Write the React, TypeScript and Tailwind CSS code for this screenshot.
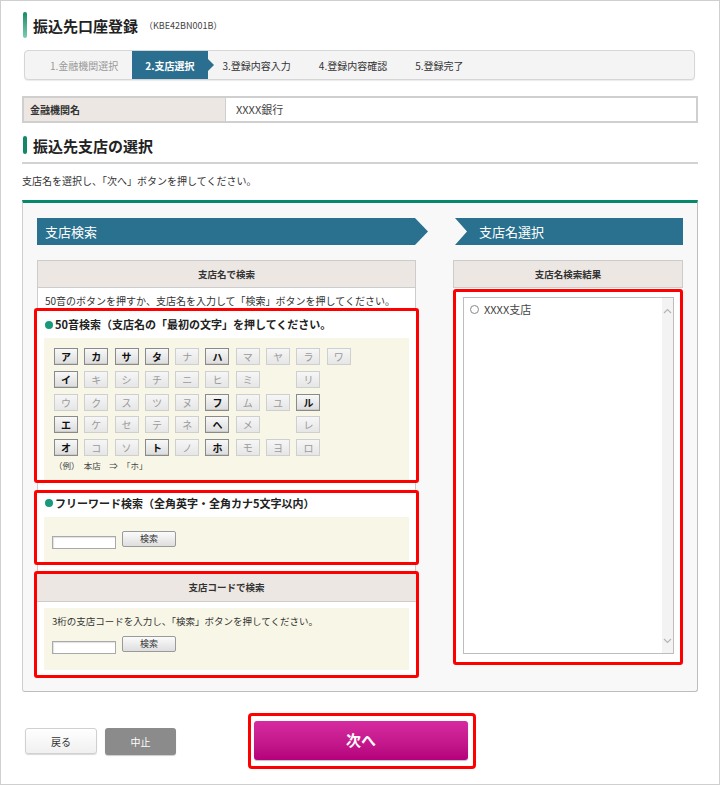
import React from "react";

const rows: string[][] = [
  ["ア", "カ", "サ", "タ", "ナ", "ハ", "マ", "ヤ", "ラ", "ワ"],
  ["イ", "キ", "シ", "チ", "ニ", "ヒ", "ミ", "", "リ", ""],
  ["ウ", "ク", "ス", "ツ", "ヌ", "フ", "ム", "ユ", "ル", ""],
  ["エ", "ケ", "セ", "テ", "ネ", "ヘ", "メ", "", "レ", ""],
  ["オ", "コ", "ソ", "ト", "ノ", "ホ", "モ", "ヨ", "ロ", ""],
];
const activeKana = "アカサタハイフルエヘオトホ";

function KanaButton({ k }: { k: string }) {
  if (!k) return <div className="w-[24px] h-[17px]" />;
  const on = activeKana.includes(k);
  return (
    <div
      className={
        on
          ? "w-[24px] h-[17px] flex items-center justify-center text-[10px] font-bold text-[#111] border border-[#8a8a8a] bg-linear-to-b from-[#f8f8f8] to-[#dcdcdc] shadow-[inset_0_-1px_0_rgba(0,0,0,0.08)]"
          : "w-[24px] h-[17px] flex items-center justify-center text-[10px] text-[#9a9a9a] border border-[#cfcfcf] bg-linear-to-b from-[#f6f6f6] to-[#e6e6e6]"
      }
    >
      {k}
    </div>
  );
}

function SearchRow() {
  return (
    <div className="flex items-start">
      <div className="mt-[5px] w-[64px] h-[13px] bg-white border border-[#a9a9a9] shadow-[inset_1px_1px_1px_rgba(0,0,0,0.12)]" />
      <div className="ml-[6px] w-[54px] h-[16px] flex items-center justify-center text-[9px] text-[#333] border border-[#9a9a9a] rounded-[2px] bg-linear-to-b from-[#fbfbfb] to-[#dedede]">
        検索
      </div>
    </div>
  );
}

export default function App() {
  return (
    <div className="w-[720px] h-[785px] bg-white border border-[#cfcfcf] px-[21px] pt-[11px] text-[#333] [font-family:'Noto_Sans_CJK_JP','Noto_Sans',sans-serif]">
      {/* Title */}
      <div className="flex items-center h-[26px]">
        <div className="ml-[1px] w-[4px] h-[26px] rounded-[2px] bg-linear-to-b from-[#0a8a68] to-[#7ccdb2]" />
        <div className="ml-[6px] text-[15px] font-bold text-[#222] leading-none">振込先口座登録</div>
        <div className="ml-[6px] text-[9px] text-[#444] leading-none">（KBE42BN001B）</div>
      </div>

      {/* Stepper */}
      <div className="mt-[12px] ml-[2px] w-[671px] h-[30px] flex items-center border border-[#d6d6d6] rounded-[4px] bg-[#f4f4f4] shadow-[0_1px_1px_rgba(0,0,0,0.08)] text-[10px]">
        <div className="pl-[25px] text-[#999]">1.金融機関選択</div>
        <div className="ml-[14px] relative h-full flex items-center bg-[#2a6f8f] px-[13px] text-white font-bold">
          2.支店選択
          <div className="absolute right-[-6px] top-[8px] w-0 h-0 border-y-[6px] border-y-transparent border-l-[6px] border-l-[#2a6f8f]" />
        </div>
        <div className="ml-[15px] text-[#333]">3.登録内容入力</div>
        <div className="ml-[28px] text-[#333]">4.登録内容確認</div>
        <div className="ml-[28px] text-[#333]">5.登録完了</div>
      </div>

      {/* Info table */}
      <div className="mt-[16px] h-[27px] flex border-2 border-[#cfcfcf]">
        <div className="w-[202px] bg-[#ece7e2] border-r border-[#cfcfcf] flex items-center pl-[6px] text-[10px] font-bold text-[#333]">
          金融機関名
        </div>
        <div className="flex-1 flex items-center pl-[10px] text-[11px] text-[#444]">XXXX銀行</div>
      </div>

      {/* Section heading */}
      <div className="mt-[13px] flex items-center h-[18px]">
        <div className="ml-[1px] w-[4px] h-[18px] rounded-[2px] bg-[#138866]" />
        <div className="ml-[6px] text-[15px] font-bold text-[#222] leading-none">振込先支店の選択</div>
      </div>
      <div className="mt-[8px] h-[2px] bg-[#d2d2d2]" />
      <div className="mt-[11px] text-[10px] leading-[12px] text-[#333]">支店名を選択し、「次へ」ボタンを押してください。</div>

      {/* Main panel */}
      <div className="mt-[13px] h-[492px] bg-[#f8f8f8] border border-[#cfcfcf] border-t-[3px] border-t-[#04896b] border-r-[#bdbdbd] border-b-[#bdbdbd] rounded-b-[3px] pl-[14px] pt-[15px] flex">
        {/* Left column */}
        <div className="w-[391px]">
          <div className="h-[27px] bg-[#2a7190] [clip-path:polygon(0_0,calc(100%-13px)_0,100%_50%,calc(100%-13px)_100%,0_100%)] flex items-center pl-[8px] text-[13px] text-white">
            支店検索
          </div>
          <div className="mt-[15px] w-[379px] bg-white border border-[#cccccc]">
            <div className="h-[27px] bg-[#ece7e2] border-b border-[#cccccc] flex items-center justify-center text-[9.5px] font-bold text-[#333]">
              支店名で検索
            </div>
            <div className="h-[20px] pl-[7px] pt-[6px] text-[10px] leading-[13px] text-[#333] whitespace-nowrap">
              50音のボタンを押すか、支店名を入力して「検索」ボタンを押してください。
            </div>

            {/* 50音検索 */}
            <div className="-mx-[4px] border-[3px] border-[#ff0000] rounded-[3px] bg-white relative">
              <div className="h-[27px] flex items-center pl-[8px] text-[11px] font-bold text-[#222]">
                <span className="w-[8px] h-[8px] rounded-full bg-[#17997a] mr-[2px]" />
                50音検索（支店名の「最初の文字」を押してください。
              </div>
              <div className="mx-[7px] h-[142px] bg-[#f8f7e7] pl-[10px] pt-[10px]">
                <div className="grid grid-cols-[repeat(10,24px)] gap-x-[6.3px] gap-y-[5.8px]">
                  {rows.flat().map((k, i) => (
                    <KanaButton key={i} k={k} />
                  ))}
                </div>
                <div className="mt-[4px] text-[8.5px] leading-[10px] text-[#444] whitespace-pre">（例）　本店　⇒　「ホ」</div>
              </div>
            </div>

            {/* フリーワード検索 */}
            <div className="-mx-[4px] mt-[7px] border-[3px] border-[#ff0000] rounded-[3px] bg-white relative">
              <div className="h-[24px] flex items-start pt-[3px] pl-[8px] text-[11px] leading-[14px] font-bold text-[#222]">
                <span className="w-[8px] h-[8px] mt-[3px] rounded-full bg-[#17997a] mr-[2px]" />
                フリーワード検索（全角英字・全角カナ5文字以内）
              </div>
              <div className="mx-[7px] h-[45px] bg-[#f8f7e7] pl-[8px] pt-[14px]">
                <SearchRow />
              </div>
            </div>

            {/* 支店コードで検索 */}
            <div className="-mx-[4px] mt-[6px] -mb-[4px] border-[3px] border-[#ff0000] rounded-[3px] bg-white relative">
              <div className="h-[28px] bg-[#ece7e2] border-b border-[#cccccc] flex items-center justify-center text-[9.5px] font-bold text-[#333]">
                支店コードで検索
              </div>
              <div className="mx-[7px] mt-[6px] mb-[5px] h-[62px] bg-[#f8f7e7] pl-[8px] pt-[7px]">
                <div className="text-[9.5px] leading-[12px] text-[#333]">3桁の支店コードを入力し、「検索」ボタンを押してください。</div>
                <div className="mt-[9px]">
                  <SearchRow />
                </div>
              </div>
            </div>
          </div>
        </div>

        {/* Right column */}
        <div className="ml-[25px] w-[230px]">
          <div className="ml-[2px] h-[27px] bg-[#2a7190] [clip-path:polygon(0_0,100%_0,100%_100%,0_100%,12px_50%)] flex items-center pl-[24px] text-[13px] text-white">
            支店名選択
          </div>
          <div className="mt-[15px] h-[28px] bg-[#ece7e2] border border-[#cccccc] flex items-center justify-center text-[9.5px] font-bold text-[#333]">
            支店名検索結果
          </div>
          <div className="mt-[1px] h-[376px] border-[3px] border-[#ff0000] rounded-[3px] bg-white pl-[7px] pr-[6px] pt-[5px] pb-[8px]">
            <div className="h-full border border-[#bdbdbd] flex bg-white">
              <div className="flex-1 pl-[6px] pt-[4px]">
                <div className="flex items-center h-[14px]">
                  <span className="w-[9px] h-[9px] rounded-full border border-[#888] bg-white" />
                  <span className="ml-[5px] text-[11px] text-[#444] leading-none">XXXX支店</span>
                </div>
              </div>
              <div className="w-[11px] bg-[#f3f3f3] flex flex-col justify-between items-center pt-[10px] pb-[9px]">
                <svg width="9" height="6" viewBox="0 0 9 6">
                  <path d="M1 5 L4.5 1.5 L8 5" fill="none" stroke="#b5b5b5" strokeWidth="1.2" />
                </svg>
                <svg width="9" height="6" viewBox="0 0 9 6">
                  <path d="M1 1 L4.5 4.5 L8 1" fill="none" stroke="#b5b5b5" strokeWidth="1.2" />
                </svg>
              </div>
            </div>
          </div>
        </div>
      </div>

      {/* Bottom buttons */}
      <div className="mt-[21px] flex items-center">
        <div className="ml-[3px] w-[72px] h-[26px] flex items-center justify-center bg-linear-to-b from-white to-[#f0f0f0] border border-[#d0d0d0] rounded-[3px] shadow-[0_1px_1px_rgba(0,0,0,0.15)] text-[10px] text-[#333]">
          戻る
        </div>
        <div className="ml-[8px] w-[71px] h-[27px] flex items-center justify-center bg-[#8b8b8b] rounded-[3px] shadow-[0_1px_1px_rgba(0,0,0,0.2)] text-[10px] text-white">
          中止
        </div>
        <div className="ml-[72px] w-[228px] h-[56px] border-[3px] border-[#ff0000] rounded-[4px] pl-[3px] pr-[5px] pt-[5px] pb-[6px]">
          <div className="h-full flex items-center justify-center rounded-[3px] bg-linear-to-b from-[#d62ba0] to-[#b5007c] shadow-[0_1px_1px_rgba(0,0,0,0.25)] text-[15px] font-bold text-white">
            次へ
          </div>
        </div>
      </div>
    </div>
  );
}
